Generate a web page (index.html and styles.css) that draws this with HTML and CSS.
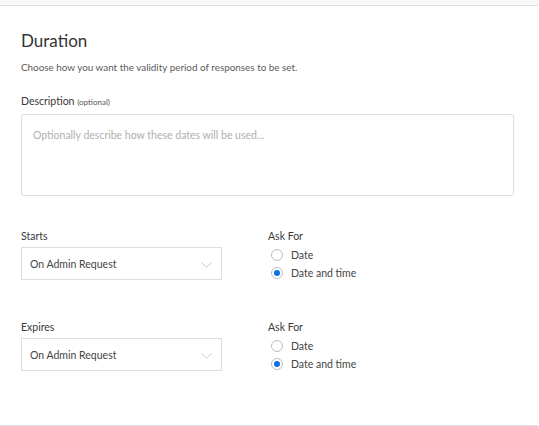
FILE: index.html
```html
<!DOCTYPE html>
<html>
<head>
<meta charset="utf-8">
<link rel="stylesheet" href="styles.css">
</head>
<body>
<div class="topbar"></div>
<div class="card">
  <h2 class="title">Duration</h2>
  <p class="sub">Choose how you want the validity period of responses to be set.</p>
  <div class="label">Description <span class="opt">(optional)</span></div>
  <div class="textarea"><span class="ph">Optionally describe how these dates will be used...</span></div>

  <div class="row first">
    <div class="col-left">
      <div class="label">Starts</div>
      <div class="select"><span>On Admin Request</span>
        <svg class="chev" width="11" height="6" viewBox="0 0 11 6"><polyline points="0.5,0.5 5.5,5.2 10.5,0.5" fill="none" stroke="#c9c9c9" stroke-width="1"/></svg>
      </div>
    </div>
    <div class="col-right">
      <div class="label">Ask For</div>
      <div class="radio"><span class="circle"></span>Date</div>
      <div class="radio"><span class="circle on"></span>Date and time</div>
    </div>
  </div>

  <div class="row second">
    <div class="col-left">
      <div class="label">Expires</div>
      <div class="select"><span>On Admin Request</span>
        <svg class="chev" width="11" height="6" viewBox="0 0 11 6"><polyline points="0.5,0.5 5.5,5.2 10.5,0.5" fill="none" stroke="#c9c9c9" stroke-width="1"/></svg>
      </div>
    </div>
    <div class="col-right">
      <div class="label">Ask For</div>
      <div class="radio"><span class="circle"></span>Date</div>
      <div class="radio"><span class="circle on"></span>Date and time</div>
    </div>
  </div>
</div>
</body>
</html>
```
FILE: styles.css
```css
html, body {
  margin: 0;
  padding: 0;
  background: #fff;
}
body {
  font-family: "Lato", "Noto Sans", sans-serif;
  color: #3a3a3a;
  width: 539px;
  height: 426px;
  overflow: hidden;
}
.topbar {
  height: 5px;
  width: 538px;
  background: #f7f7f8;
}
.card {
  width: 538px;
  height: 421px;
  box-sizing: border-box;
  border-top: 1px solid #dcdfe9;
  border-bottom: 1px solid #dcdfe9;
  padding: 0 0 0 21px;
}
.title {
  margin: 0;
  padding-top: 23px;
  font-size: 17px;
  line-height: 24px;
  font-weight: 400;
  color: #333;
}
.sub {
  margin: 6px 0 0;
  font-size: 9.9px;
  line-height: 16px;
  color: #5a5a5a;
}
.label {
  font-size: 10.5px;
  line-height: 16px;
  color: #3a3a3a;
}
.card > .label {
  margin-top: 18px;
}
.opt {
  font-size: 8px;
  color: #555;
}
.textarea {
  margin-top: 4px;
  width: 493px;
  height: 82px;
  box-sizing: border-box;
  border: 1px solid #dedede;
  border-radius: 3px;
  padding: 8px 11px;
}
.ph {
  font-size: 10.5px;
  line-height: 16px;
  color: #b0b0b0;
}
.row {
  display: grid;
  grid-template-columns: 247px 1fr;
}
.row.first { margin-top: 32px; }
.row.second { margin-top: 37px; }
.select {
  margin-top: 3px;
  width: 201px;
  height: 33px;
  box-sizing: border-box;
  border: 1px solid #dedede;
  display: flex;
  align-items: center;
  justify-content: space-between;
  padding: 0 9px 0 8px;
  font-size: 10.5px;
  color: #444;
}
.chev { margin-top: 2px; }
.radio {
  display: flex;
  align-items: center;
  font-size: 10.5px;
  line-height: 18px;
  color: #444;
  margin-left: 3px;
}
.col-right .label + .radio { margin-top: 2px; }
.circle {
  width: 12px;
  height: 12px;
  box-sizing: border-box;
  border: 1px solid #bdbdbd;
  border-radius: 50%;
  margin-right: 8px;
  display: flex;
  align-items: center;
  justify-content: center;
}
.circle.on::after {
  content: "";
  width: 6px;
  height: 6px;
  border-radius: 50%;
  background: #0a6fe8;
}
```
